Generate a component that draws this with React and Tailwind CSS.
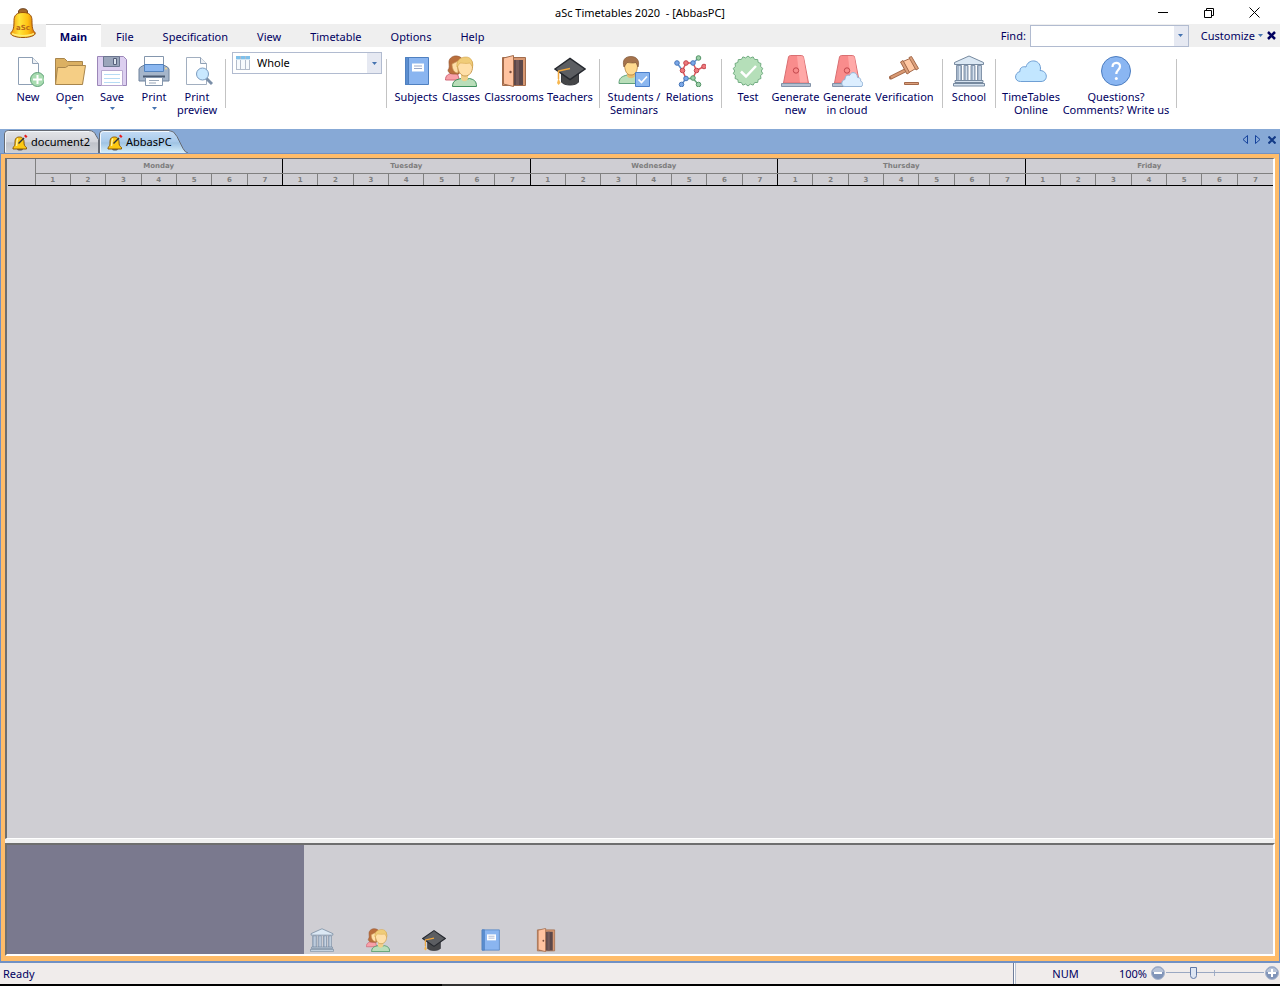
import React from "react";

const INK = "#00005f";

const Svg = ({ size = 32, children, className = "" }) => (
  <svg
    width={size}
    height={size}
    viewBox="0 0 32 32"
    fill="none"
    aria-hidden="true"
    className={`block shrink-0 ${className}`}
  >
    {children}
  </svg>
);

const NewIcon = () => (
  <Svg>
    <path d="M6.5 2.5h14l6 6v21h-20z" fill="#fff" stroke="#8fa0b5" />
    <path d="M20.500 2.500v6h6" fill="#eef1f5" stroke="#8fa0b5" />
    <circle cx="25.500" cy="24.500" r="7" fill="#a8dbb0" stroke="#5fa078" />
    <path d="M25.500 20v9M21 24.500h9" stroke="#fff" strokeWidth="2" />
  </Svg>
);

const OpenIcon = () => (
  <Svg>
    <path d="M1.500 29V3.500h9l3 3h15V29z" fill="#dbb062" stroke="#a8854c" />
    <path d="M1.500 29.500l2-17h8l3-2h17l-3 19z" fill="#f5ce85" stroke="#a8854c" />
  </Svg>
);

const SaveIcon = () => (
  <Svg>
    <path d="M1.500 1.500h26l3 3v26h-29z" fill="#dccff0" stroke="#9b86b8" />
    <path d="M7.500 1.500h16v10h-16z" fill="#9aa5ba" stroke="#6c7690" />
    <path d="M17.500 3.500h3v6h-3z" fill="#dce3ee" stroke="#56607a" />
    <path d="M5.500 15.500h21v15h-21z" fill="#fff" stroke="#b7a8d0" />
    <path d="M8 19.500h16M8 23.500h16M8 27.500h16" stroke="#b6dcf5" />
  </Svg>
);

const PrintIcon = () => (
  <Svg>
    <path d="M6.500 10V1.500h19V10" fill="#fff" stroke="#8496ad" />
    <path d="M2.500 12l4-2h19l4 2 1.500 2v12h-30V14z" fill="#a5b5ca" stroke="#6f829c" />
    <path d="M6.500 9.500h19v7h-19z" fill="#8bb7f0" stroke="#5382bd" />
    <path d="M5 21.500h22" stroke="#4a5a72" strokeWidth="2" />
    <path d="M7.500 22.500h17v8h-17z" fill="#fff" stroke="#8496ad" />
    <path d="M11 25.500h10M11 28h7" stroke="#98a6b8" />
    <circle cx="28" cy="13.500" r="1" fill="#f5d98c" />
  </Svg>
);

const PreviewIcon = () => (
  <Svg>
    <path d="M5.500 2.500h14l6 6v21h-20z" fill="#fff" stroke="#a2afc0" />
    <path d="M19.500 2.500v6h6" fill="#eef1f5" stroke="#8fa0b5" />
    <path d="M25 23l6 6" stroke="#7b8fa8" strokeWidth="3" />
    <circle cx="21.500" cy="19" r="6" fill="#c9e8ff" stroke="#7b9cc0" />
  </Svg>
);

const BookIcon = ({ size }) => (
  <Svg size={size}>
    <path d="M5.500 2.500h23v27h-23z" fill="#8ab5f0" stroke="#4f80c0" />
    <path d="M5.500 2.500h3v27h-3z" fill="#5b8ed0" stroke="#4f80c0" />
    <path d="M12 8.500h12v8H12z" fill="#fff" />
    <path d="M14 11h8M14 13.500h8" stroke="#9aa8c8" />
  </Svg>
);

const ClassesIcon = ({ size }) => (
  <Svg size={size}>
    <path d="M.500 25c0-5 3-6 7-7l5 1 2 6z" fill="#f8a0a8" stroke="#d06878" />
    <path d="M3 15c2-2 1-5 1-8 0-4 4-6.500 8-6 4 .5 6 3 6 6l-4 12H8c-3 0-5-2-5-4z" fill="#ba6f3c" stroke="#975632" strokeWidth=".7" />
    <path d="M7 9l6-3v12c-4 0-6-4-6-9z" fill="#ffdfa8" stroke="#c79454" strokeWidth=".7" />
    <path d="M7.500 31.500c0-6 4-7 9-8l4 1 4-1c4 1 7 2 7 8z" fill="#b9deb9" stroke="#3f8f5c" />
    <path d="M16 18h7v6c-2 3-5 3-7 0z" fill="#f0cf8a" />
    <path d="M12.500 11c0-5 3-8 8-8s8 3 7 9c0 5-3 9-7.500 9s-7-5-7.500-10z" fill="#ffdfa8" stroke="#c99d55" />
    <path d="M12 12c-1-6 3-10 9-10 5 0 7 4 6.500 10L25 8c-4 1-8 0-10 0z" fill="#f0cc78" stroke="#d5a750" strokeWidth=".6" />
  </Svg>
);

const DoorIcon = ({ size }) => (
  <Svg size={size}>
    <path d="M4.500 2.500h23v28h-23z" fill="#d79872" stroke="#a36c4c" />
    <path d="M7 5h18v25H7z" fill="#5c484a" />
    <path d="M18 5h3v25h-3z" fill="#735a5a" />
    <path d="M5.500 3l10-2.500v31L5.500 29z" fill="#ffc3a0" stroke="#a36c4c" />
    <circle cx="12.500" cy="17" r="1.200" fill="#7c4e3c" />
  </Svg>
);

const CapIcon = ({ size }) => (
  <Svg size={size}>
    <path d="M7.500 16v11c2 4 15 4 17 0V16z" fill="#454648" stroke="#393b40" />
    <path d="M1 14L16 3.500 31 14 16 24.500z" fill="#5c5e62" stroke="#25282e" strokeWidth="1.500" />
    <path d="M16 13.500L4.500 16v8" stroke="#f0a63c" strokeWidth="1.500" />
    <path d="M4.500 23l-1.500 5 1.500 2 2-2z" fill="#f7b750" />
  </Svg>
);

const StudentsIcon = () => (
  <Svg>
    <path d="M1 28.500c0-6 3-7 8-8.500h8c4 1 6 3 6 8.500z" fill="#b9deb9" stroke="#5fa078" />
    <path d="M9 16h8v5c-2 3-6 3-8 0z" fill="#e8bd6e" />
    <path d="M6.500 10c0-4 3-6 6.500-6s7 2 6.500 6c0 6-2 10-6.500 10s-6-4-6.500-10z" fill="#ffda8f" stroke="#b3803f" strokeWidth=".8" />
    <path d="M6 12C4 5 7 1.500 13 1.500S22 6 20 12l-2-4.500c-3 1-7 0-9 0z" fill="#a5734c" stroke="#7c5334" strokeWidth=".7" />
    <path d="M17.500 17.500h14v14h-14z" fill="#8bb7f0" stroke="#4a7fcb" />
    <path d="M20.500 24.500l3 3 5.500-6" stroke="#fff" strokeWidth="1.700" />
  </Svg>
);

const NODES = [
  [3, 8, "b"],
  [12, 8, "r"],
  [19, 8, "b"],
  [24.5, 3, "g"],
  [30, 11.500, "r"],
  [22.500, 15.500, "r"],
  [8.500, 15.500, "r"],
  [12, 23.500, "b"],
  [19, 23, "g"],
  [7.500, 29.500, "b"],
  [24.500, 29.500, "g"],
];
const NODE_FILL = { b: "#7aa7e8", r: "#f0787c", g: "#9bd0a8" };
const NODE_EDGE = { b: "#4877b8", r: "#c04850", g: "#559468" };

const RelationsIcon = () => (
  <Svg>
    <path d="M3 8l5.500 7.500M19 8l5.500-5M12 23.500l-4.500 6" stroke="#5d8cca" strokeWidth="1.500" />
    <path d="M8.500 15.500L12 8h7l3.500 7.500 7.500-4M8.500 15.500l3.500 8M22.500 15.500L19 23" stroke="#df5358" strokeWidth="1.500" />
    <path d="M12 23.500h7l5.500 6" stroke="#66a87b" strokeWidth="1.500" />
    {NODES.map(([x, y, c]) => (
      <circle key={`${x}-${y}`} cx={x} cy={y} r="2.300" fill={NODE_FILL[c]} stroke={NODE_EDGE[c]} />
    ))}
  </Svg>
);

// Seal outline: 18 shallow teeth round a circle
const SEAL_POINTS = Array.from({ length: 36 }, (_, i) => {
  const r = i % 2 ? 13.3 : 15;
  const a = (i * Math.PI) / 18;
  return `${(16 + r * Math.sin(a)).toFixed(2)},${(16 - r * Math.cos(a)).toFixed(2)}`;
}).join(" ");

const TestIcon = () => (
  <Svg>
    <polygon points={SEAL_POINTS} fill="#b5dfb9" stroke="#72ad82" strokeLinejoin="round" />
    <path d="M9 16.500l5 5L24 11" stroke="#fff" strokeWidth="2.500" />
  </Svg>
);

const Siren = () => (
  <>
    <path d="M3.500 28l5-26q.500-1.500 2-1.500h11q1.500 0 2 1.500l5 26z" fill="#f98c8c" stroke="#d96f72" />
    <path d="M17 1h4.500q1.500 0 2 1.500l4 25H20z" fill="#ffa9a8" />
    <circle cx="16" cy="15.500" r="2.700" fill="#f98c8c" stroke="#c2474c" />
    <path d="M1.500 28.500h29v3h-29z" fill="#b4c1d2" stroke="#8292a8" />
  </>
);

const GenerateIcon = () => (
  <Svg>
    <Siren />
  </Svg>
);

const GenerateCloudIcon = () => (
  <Svg>
    <Siren />
    <path d="M14 31.500c-4.500 0-4-6.500 0-7 0-4 2.500-5 4.500-4 2-5 8-3 8 2 3 0 3.500 2 3 3.500 3 1 3 5.500 0 5.500z" fill="#dceeff" stroke="#92b2d6" />
  </Svg>
);

const GavelIcon = () => (
  <Svg>
    <path d="M2 22.500l17-8.500" stroke="#a4694a" strokeWidth="4" strokeLinecap="round" />
    <path d="M2 22.500l17-8.500" stroke="#d99a74" strokeWidth="2" />
    <path d="M14 6.500l8-3.500 5.500 10-7.500 4.500z" fill="#ffc8a3" stroke="#a4694a" />
    <path d="M11.500 7l2.500-1.500 6.500 12L18 19zM20 2.500l2.500-1L29.500 13.500l-2.500 1.500z" fill="#dca07b" stroke="#a4694a" />
    <path d="M15.500 27.500h14v2h-14z" fill="#dca07b" stroke="#a4694a" />
  </Svg>
);

const SchoolIcon = ({ size }) => (
  <Svg size={size}>
    <path d="M1.500 9.500v-2L16 1l14.500 6.500v2z" fill="#dbe8f4" stroke="#76899f" />
    <path d="M3.500 10.500h5v15h-5zM11 10.500h4v15h-4zM18 10.500h4v15h-4zM24.500 10.500h4v15h-4z" fill="#a5b6ca" stroke="#8495ab" />
    <path d="M6.500 11v14M13.500 11v14M20.500 11v14M27 11v14" stroke="#d8e3ef" />
    <path d="M2 25.500h28v2H2zM.500 28.500h31v2.500H.500z" fill="#d5e2ef" stroke="#76899f" />
  </Svg>
);

const CloudIcon = () => (
  <Svg>
    <path
      d="M5.500 26.500C-1 26.500-1 18 5 16.500c-.500-4 3-5.500 6-4.500C13 3.500 25 4 25.500 13c0 1 0 1.500-.500 2.500 8 0 8.500 11 1 11z"
      fill="#c2e6ff"
      stroke="#6f9fd4"
    />
  </Svg>
);

const QuestionIcon = () => (
  <Svg>
    <circle cx="16" cy="16" r="14.500" fill="#8ab6f2" stroke="#4c7dc0" />
    <path d="M12.500 12c0-5.500 7.500-5.500 7.500-.500 0 3-3.700 3.500-3.700 7.500" stroke="#fff" strokeWidth="2.200" />
    <circle cx="16.300" cy="23.500" r="1.500" fill="#fff" />
  </Svg>
);

const Logo = () => (
  <svg width="28" height="32" viewBox="0 0 28 32" aria-hidden="true">
    <defs>
      <linearGradient id="bell" x1="0" x2="1">
        <stop offset="0" stopColor="#f5960a" />
        <stop offset=".35" stopColor="#ffe53a" />
        <stop offset=".7" stopColor="#ffc012" />
        <stop offset="1" stopColor="#d46c08" />
      </linearGradient>
    </defs>
    <ellipse cx="14" cy="4" rx="4.500" ry="3.300" fill="#a86a28" stroke="#69401c" />
    <path
      d="M14 4.500c6.500 0 9 3 9 8 0 7 .5 9.500 3 12 1.500 2.500-4 5-12 5s-13.500-2.500-12-5c2.500-2.500 3-5 3-12 0-5 2.500-8 9-8z"
      fill="url(#bell)"
      stroke="#9a520c"
    />
    <path d="M3 25.500c5 3 17 3 22 0" fill="none" stroke="#ffed78" strokeWidth="1.500" />
    <text x="14" y="22" textAnchor="middle" fontSize="7" fontWeight="700" fontFamily="DejaVu Sans" fill="#b8681a">
      aSc
    </text>
  </svg>
);

const TabBell = () => (
  <svg width="16" height="17" viewBox="0 0 16 17" aria-hidden="true">
    <path d="M5 15c0 2 6 2 6 0z" fill="#565a60" />
    <path d="M7.500 3c3.500 0 4.500 2.500 4.500 5 0 3 .5 4 2.500 5.500v1.500H1v-1.500C3 12 3 11 3 8s1-5 4.500-5z" fill="#fcc812" stroke="#8b5a08" />
    <path d="M6 4.500C4.500 6 5 9 4.500 12" stroke="#fff3a0" fill="none" strokeWidth="1.500" />
    <path d="M6.500 9.500L12 4" stroke="#30343a" strokeWidth="1.500" />
    <path d="M12 2l1.500-1.500 2 2L14 4z" fill="#e8191c" />
  </svg>
);

const Caret = () => (
  <svg width="5" height="3" viewBox="0 0 5 3" aria-hidden="true" className="block">
    <path d="M0 0h5L2.500 3z" fill="#4573b0" />
  </svg>
);

const GROUPS = [
  [
    { label: "Subjects", icon: BookIcon, width: "w-12" },
    { label: "Classes", icon: ClassesIcon, width: "w-[42px]" },
    { label: "Classrooms", icon: DoorIcon, width: "w-16" },
    { label: "Teachers", icon: CapIcon, width: "w-12" },
  ],
  [
    { label: "Students /\nSeminars", icon: StudentsIcon, width: "w-[58px]" },
    { label: "Relations", icon: RelationsIcon, width: "w-[53px]" },
  ],
  [
    { label: "Test", icon: TestIcon, width: "w-[42px]" },
    { label: "Generate\nnew", icon: GenerateIcon, width: "w-[53px]" },
    { label: "Generate\nin cloud", icon: GenerateCloudIcon, width: "w-[50px]" },
    { label: "Verification", icon: GavelIcon, width: "w-[65px]" },
  ],
  [{ label: "School", icon: SchoolIcon, width: "w-[42px]" }],
  [
    { label: "TimeTables\nOnline", icon: CloudIcon, width: "w-[60px]" },
    { label: "Questions?\nComments? Write us", icon: QuestionIcon, width: "w-[110px]" },
  ],
];

const FILE_GROUP = [
  { label: "New", icon: NewIcon, width: "w-[42px]" },
  { label: "Open", icon: OpenIcon, width: "w-[42px]", menu: true },
  { label: "Save", icon: SaveIcon, width: "w-[42px]", menu: true },
  { label: "Print", icon: PrintIcon, width: "w-[42px]", menu: true },
  { label: "Print\npreview", icon: PreviewIcon, width: "w-[44px]" },
];

const MENU = ["File", "Specification", "View", "Timetable", "Options", "Help"];
const DAYS = ["Monday", "Tuesday", "Wednesday", "Thursday", "Friday"];
const PERIODS = [1, 2, 3, 4, 5, 6, 7];

const RibbonButton = ({ label, icon: Icon, width, menu }) => (
  <button type="button" className={`flex shrink-0 flex-col items-center ${width}`}>
    <Icon />
    <span className="mt-[3px] whitespace-pre text-center leading-[13px]">{label}</span>
    {menu && (
      <span className="mt-1">
        <Caret />
      </span>
    )}
  </button>
);

const RibbonGroup = ({ items }) => (
  <div className="flex items-start px-[5px]">
    {items.map((item) => (
      <RibbonButton key={item.label} {...item} />
    ))}
  </div>
);

const Divider = () => <div className="mt-1 h-[49px] w-px shrink-0 bg-[#c3c3c3]" />;

const TitleBar = () => (
  <header className="grid h-6 grid-cols-[1fr_auto_1fr] items-center bg-white pt-px text-black">
    <span />
    <h1 className="whitespace-pre">aSc Timetables 2020  - [AbbasPC]</h1>
    <div className="flex justify-end gap-[34px] pr-5">
      <button type="button" aria-label="Minimize">
        <svg width="12" height="12" viewBox="0 0 12 12" className="block">
          <path d="M1 5.500h10" stroke="#000" />
        </svg>
      </button>
      <button type="button" aria-label="Restore">
        <svg width="12" height="12" viewBox="0 0 12 12" fill="none" stroke="#000" className="block">
          <path d="M1.500 3.500h7v7h-7zM3.500 3.500v-2h7v7h-2" />
        </svg>
      </button>
      <button type="button" aria-label="Close">
        <svg width="11" height="12" viewBox="0 0 11 12" stroke="#000" className="block">
          <path d="M.500 .5l10 10M10.500 .5l-10 10" />
        </svg>
      </button>
    </div>
  </header>
);

const MenuBar = () => (
  <nav className="relative flex h-[23px] items-center bg-[#efefef] pl-[46px]">
    <div className="absolute left-[9px] -top-4">
      <Logo />
    </div>
    <button type="button" className="h-full w-[55px] border-t border-[#c8c8c8] bg-white pt-px font-bold">
      Main
    </button>
    <div className="flex gap-[29px] pl-[15px] pt-[3px]">
      {MENU.map((item) => (
        <button type="button" key={item}>
          {item}
        </button>
      ))}
    </div>
    <div className="ml-auto flex h-full items-center pr-1">
      <label htmlFor="find" className="pr-1">
        Find:
      </label>
      <div className="flex h-[22px] w-[159px] border border-[#b1bbd0] bg-white">
        <input id="find" type="text" className="min-w-0 flex-1 px-1 outline-none" />
        <button type="button" aria-label="Recent searches" className="flex w-[14px] items-center justify-center bg-[#e6e9f2]">
          <Caret />
        </button>
      </div>
      <button type="button" className="flex items-center gap-[3px] pl-3">
        Customize <Caret />
      </button>
      <button type="button" aria-label="Close window" className="pl-1">
        <svg width="9" height="9" viewBox="0 0 9 9" stroke={INK} strokeWidth="2.500" className="block">
          <path d="M1 1l7 7M8 1L1 8" />
        </svg>
      </button>
    </div>
  </nav>
);

const Ribbon = () => (
  <section aria-label="Main ribbon" className="flex h-[82px] items-start overflow-hidden bg-white pt-2">
    <div className="flex items-start pl-[7px] pr-[6px]">
      {FILE_GROUP.map((item) => (
        <RibbonButton key={item.label} {...item} />
      ))}
    </div>
    <Divider />
    <div className="-mt-[3px] shrink-0 pl-[6px] pr-1">
      <div className="relative flex h-[22px] w-[150px] items-center border border-[#b1bbd0] bg-white text-black">
        <svg width="14" height="14" viewBox="0 0 14 14" className="ml-[3px] shrink-0" aria-hidden="true">
          <path d="M0 0h14v14H0z" fill="#f7fafd" />
          <path d="M0 0h14v4H0z" fill="#7fc0ea" />
          <path d="M.500 4v10M4.500 0v14M9.500 0v14M13.500 4v10M0 13.500h14" stroke="#b3bccb" />
          <path d="M0 3.500h14" stroke="#cfe6f5" />
        </svg>
        <select aria-label="View" className="h-full flex-1 appearance-none pl-[7px] outline-none" defaultValue="Whole">
          <option>Whole</option>
        </select>
        <span className="pointer-events-none flex h-full w-[14px] items-center justify-center bg-[#e6e9f2]">
          <Caret />
        </span>
      </div>
    </div>
    {GROUPS.map((items) => (
      <React.Fragment key={items[0].label}>
        <Divider />
        <RibbonGroup items={items} />
      </React.Fragment>
    ))}
    <Divider />
  </section>
);

const DocTab = ({ name, active }) => (
  <button
    type="button"
    className={`relative flex h-6 items-center text-xs text-black ${active ? "w-[89px]" : "w-[95px]"}`}
  >
    <svg
      width={active ? 89 : 95}
      height="24"
      viewBox={active ? "0 0 89 24" : "0 0 95 24"}
      className="absolute inset-0"
      aria-hidden="true"
    >
      <defs>
        <linearGradient id={`tab-${name}`} x2="0" y2="1">
          <stop offset="0" stopColor={active ? "#c4dcf6" : "#e4e5e9"} />
          <stop offset=".5" stopColor={active ? "#a9caea" : "#d2d4da"} />
          <stop offset=".55" stopColor={active ? "#9fc3e3" : "#bfc2c9"} />
          <stop offset="1" stopColor={active ? "#d6effc" : "#cfd1d6"} />
        </linearGradient>
      </defs>
      <path
        d={
          active
            ? "M.5 24V5q0-3.500 4-3.500H70q5 0 8 6l6 12q2 4 5 4.500"
            : "M.5 24V5q0-3.500 4-3.500H85q5 0 7 5l2.500 4V24"
        }
        fill={`url(#tab-${name})`}
        stroke="#666b74"
      />
      <path d={active ? "M1.500 23V5.500q0-3 3-3H70" : "M1.500 23V5.500q0-3 3-3H85"} fill="none" stroke="#f4f8fc" />
    </svg>
    <span className="relative flex items-center gap-[3px] pl-2 pt-[2px] text-[11px]">
      <TabBell />
      {name}
    </span>
  </button>
);

const TabStrip = () => (
  <div className="flex h-6 items-end bg-[#87a9d6] pl-1">
    <DocTab name="document2" />
    <DocTab name="AbbasPC" active />
    <div className="ml-auto flex items-center gap-[7px] pb-[9px] pr-1">
      <button type="button" aria-label="Previous tab">
        <svg width="6" height="9" viewBox="0 0 6 9" fill="none" stroke="#16439c" className="block">
          <path d="M5.500 .5v8l-4.500-4z" />
        </svg>
      </button>
      <button type="button" aria-label="Next tab">
        <svg width="6" height="9" viewBox="0 0 6 9" fill="none" stroke="#16439c" className="block">
          <path d="M.5 .5v8l4.500-4z" />
        </svg>
      </button>
      <button type="button" aria-label="Close tab">
        <svg width="8" height="8" viewBox="0 0 8 8" stroke="#123a86" strokeWidth="2" className="block">
          <path d="M.5 .5l7 7M7.500 .5l-7 7" />
        </svg>
      </button>
    </div>
  </div>
);

const Timetable = () => (
  <table className="w-full table-fixed border-collapse font-['DejaVu_Sans'] text-[7px] font-bold leading-none text-[#7d7d7d]">
    <colgroup>
      <col className="w-[27px]" />
      {DAYS.map((day) => PERIODS.map((p) => <col key={`${day}-${p}`} />))}
    </colgroup>
    <thead>
      <tr className="h-[14px]">
        <td rowSpan={2} className="border-b border-r border-b-black border-r-[#808080] p-0" />
        {DAYS.map((day, i) => (
          <th
            key={day}
            colSpan={7}
            scope="colgroup"
            className={`border-b border-[#808080] p-0 pt-[2px] ${i < 4 ? "border-r border-r-black" : ""}`}
          >
            {day}
          </th>
        ))}
      </tr>
      <tr className="h-3">
        {DAYS.map((day, i) =>
          PERIODS.map((p) => (
            <th
              key={`${day}-${p}`}
              scope="col"
              className={`border-b border-b-black p-0 pt-[2px] ${
                p < 7 ? "border-r border-r-[#808080]" : i < 4 ? "border-r border-r-black" : ""
              }`}
            >
              {p}
            </th>
          ))
        )}
      </tr>
    </thead>
  </table>
);

const SHORTCUTS = [
  { name: "School", icon: SchoolIcon },
  { name: "Classes", icon: ClassesIcon },
  { name: "Teachers", icon: CapIcon },
  { name: "Subjects", icon: BookIcon },
  { name: "Classrooms", icon: DoorIcon },
];

const Workspace = () => (
  <main className="flex min-h-0 flex-1 flex-col border-x border-t border-b-2 border-[#7191c4]">
    <div className="flex min-h-0 flex-1 flex-col border-4 border-b-[5px] border-[#ffbc69] bg-[#f0f0f0]">
      <section
        aria-label="Timetable"
        className="min-h-0 flex-1 border-b border-l-2 border-r-2 border-t border-b-white border-l-[#6e6e6e] border-r-white border-t-[#6e6e6e] bg-[#cfced3] pl-px"
      >
        <Timetable />
      </section>
      <section
        aria-label="Cards"
        className="mt-1 flex h-[113px] border-b-2 border-l-2 border-r-2 border-t-2 border-b-white border-l-[#6e6e6e] border-r-white border-t-[#6e6e6e] bg-[#cfced3]"
      >
        <div className="w-[297px] shrink-0 bg-[#7a798e]" />
        <div className="flex items-end gap-8 pb-[2px] pl-[6px]">
          {SHORTCUTS.map(({ name, icon: Icon }) => (
            <button type="button" key={name} aria-label={name}>
              <Icon size={24} />
            </button>
          ))}
        </div>
      </section>
    </div>
  </main>
);

const ZoomButton = ({ label, plus }) => (
  <button type="button" aria-label={label} className="shrink-0">
    <svg width="14" height="14" viewBox="0 0 14 14" className="block">
      <circle cx="7" cy="7" r="6.500" fill="#8094b8" stroke="#a9b6cd" />
      <path d="M1.500 6C2 0 12 0 12.500 6z" fill="#b7c3d8" />
      <path d={plus ? "M3 7h8M7 3v8" : "M3 7h8"} stroke="#fff" strokeWidth="2" />
    </svg>
  </button>
);

const StatusBar = () => (
  <footer className="flex h-[21px] items-center bg-[#f0eceb] pr-px">
    <span className="flex-1 pl-[3px]">Ready</span>
    <div className="h-full w-[3px] border-l border-r border-l-[#6f7d9a] border-r-[#b9c2d2] bg-white" />
    <span className="w-[91px] pl-2 text-center">NUM</span>
    <label htmlFor="zoom" className="w-[40px] text-right">
      100%
    </label>
    <div className="flex items-center pb-[2px] pl-1">
      <ZoomButton label="Zoom out" />
      <div className="relative flex h-4 w-[100px] items-center px-px">
        <span className="absolute left-[49px] top-[5px] h-[6px] w-px bg-[#a3b0c8]" />
        <input
          id="zoom"
          type="range"
          min="0"
          max="100"
          defaultValue="26"
          className="relative h-px w-full appearance-none bg-[#9aa8c2] [&::-webkit-slider-thumb]:h-3 [&::-webkit-slider-thumb]:w-[7px] [&::-webkit-slider-thumb]:appearance-none [&::-webkit-slider-thumb]:rounded-b-full [&::-webkit-slider-thumb]:border [&::-webkit-slider-thumb]:border-[#6078a6] [&::-webkit-slider-thumb]:bg-[#dde5f2]"
        />
      </div>
      <ZoomButton label="Zoom in" plus />
    </div>
  </footer>
);

export default function App() {
  return (
    <div className="flex h-screen flex-col overflow-hidden bg-white font-['Noto_Sans',sans-serif] text-[11px] leading-4 text-[#00005f]">
      <TitleBar />
      <MenuBar />
      <Ribbon />
      <TabStrip />
      <Workspace />
      <StatusBar />
      <div className="h-[2px] bg-black pl-[442px]">
        <div className="h-full w-12 bg-[#303030]" />
      </div>
    </div>
  );
}
